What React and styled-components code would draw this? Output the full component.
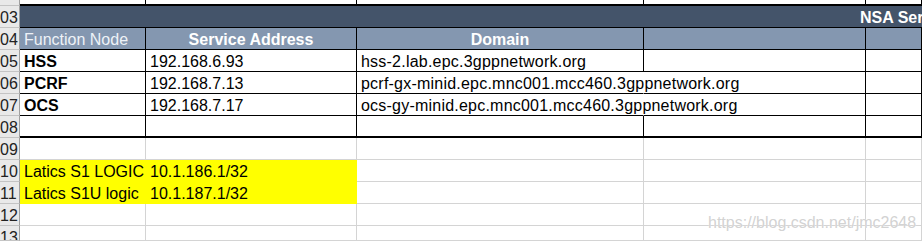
import React from 'react'
import styled, { createGlobalStyle } from 'styled-components'

const GlobalStyle = createGlobalStyle`
  html, body {
    margin: 0;
    padding: 0;
    background: #fff;
    overflow: hidden;
  }
  body {
    font-family: "Liberation Sans", Arial, sans-serif;
  }
`

const COLS = '20px 126px 211px 287px 222px 1fr'
const GRID = '#d4d4d4'

const Sheet = styled.div`
  position: relative;
  width: 922px;
  height: 241px;
  overflow: hidden;
  background: #fff;
`

const Row = styled.div`
  display: grid;
  grid-template-columns: ${COLS};
  height: ${p => p.$h || 22}px;
  overflow: hidden;
`

const RowHead = styled.div`
  box-sizing: border-box;
  background: #e9e9e9;
  border-right: 1px solid #a0a0a0;
  border-bottom: 1px solid #c4c4c4;
  color: #222;
  font-size: 16px;
  line-height: 18px;
  padding-top: 3px;
  overflow: hidden;
  white-space: nowrap;
`

const Cell = styled.div`
  box-sizing: border-box;
  padding: 3px 4px 0;
  font-size: 16px;
  line-height: 18px;
  white-space: nowrap;
  letter-spacing: ${p => (p.$wide ? '0.22px' : 'normal')};
  text-align: ${p => (p.$center ? 'center' : 'left')};
  color: ${p => p.$color || '#000'};
  font-weight: ${p => (p.$bold ? 700 : 400)};
  background: ${p => p.$bg || 'transparent'};
  border-right: 1px solid ${p => (p.$open ? 'transparent' : p.$line || '#000')};
  border-bottom: ${p => p.$bottom ?? 1}px solid ${p => p.$line || '#000'};
  overflow: visible;
  position: relative;
  z-index: ${p => (p.$open ? 1 : 0)};
`

const Banner = styled(Cell)`
  grid-column: 2 / -1;
  background: #44546a;
  color: #fff;
  font-weight: 700;
  padding-left: 840px;
  border-right: none;
  overflow: hidden;
`

const Watermark = styled.div`
  position: absolute;
  left: 708px;
  top: 214px;
  font-size: 16px;
  color: rgba(205, 205, 205, 0.9);
  text-shadow: 0 0 1px #fff;
  white-space: nowrap;
  pointer-events: none;
  z-index: 2;
`

const HEAD_BG = '#8497b0'
const YELLOW = '#ffff00'

const services = [
  { node: 'HSS', addr: '192.168.6.93', domain: 'hss-2.lab.epc.3gppnetwork.org' },
  { node: 'PCRF', addr: '192.168.7.13', domain: 'pcrf-gx-minid.epc.mnc001.mcc460.3gppnetwork.org', long: true },
  { node: 'OCS', addr: '192.168.7.17', domain: 'ocs-gy-minid.epc.mnc001.mcc460.3gppnetwork.org', long: true },
]

const logics = [
  { num: '10', name: 'Latics S1 LOGIC', ip: '10.1.186.1/32' },
  { num: '11', name: 'Latics S1U logic', ip: '10.1.187.1/32' },
]

const EmptyRow = ({ num, h, line = GRID, bottom }) => (
  <Row $h={h}>
    <RowHead>{num}</RowHead>
    <Cell $line={line} $bottom={bottom} />
    <Cell $line={line} $bottom={bottom} />
    <Cell $line={line} $bottom={bottom} />
    <Cell $line={line} $bottom={bottom} />
    <Cell $line={line} $bottom={bottom} />
  </Row>
)

export default function App() {
  return (
    <Sheet>
      <GlobalStyle />
      <EmptyRow h={6} line="#000" bottom={2} />
      <Row>
        <RowHead>03</RowHead>
        <Banner $line="#000">NSA Service Configuration</Banner>
      </Row>
      <Row>
        <RowHead>04</RowHead>
        <Cell $bg={HEAD_BG} $color="#eef2f7">Function Node</Cell>
        <Cell $bg={HEAD_BG} $color="#fff" $bold $center>Service Address</Cell>
        <Cell $bg={HEAD_BG} $color="#fff" $bold $center>Domain</Cell>
        <Cell $bg={HEAD_BG} />
        <Cell $bg={HEAD_BG} />
      </Row>
      {services.map((s, i) => (
        <Row key={s.node}>
          <RowHead>{`0${5 + i}`}</RowHead>
          <Cell $bold>{s.node}</Cell>
          <Cell>{s.addr}</Cell>
          <Cell $wide $open={s.long}>{s.domain}</Cell>
          <Cell />
          <Cell />
        </Row>
      ))}
      <EmptyRow num="08" line="#000" bottom={2} />
      <EmptyRow num="09" />
      {logics.map(l => (
        <Row key={l.num}>
          <RowHead>{l.num}</RowHead>
          <Cell $bg={YELLOW} $line={YELLOW}>{l.name}</Cell>
          <Cell $bg={YELLOW} $line={YELLOW} $bottom={0}>{l.ip}</Cell>
          <Cell $line={GRID} />
          <Cell $line={GRID} />
          <Cell $line={GRID} />
        </Row>
      ))}
      <EmptyRow num="12" />
      <EmptyRow num="13" h={15} />
      <Watermark>https://blog.csdn.net/jmc2648</Watermark>
    </Sheet>
  )
}
